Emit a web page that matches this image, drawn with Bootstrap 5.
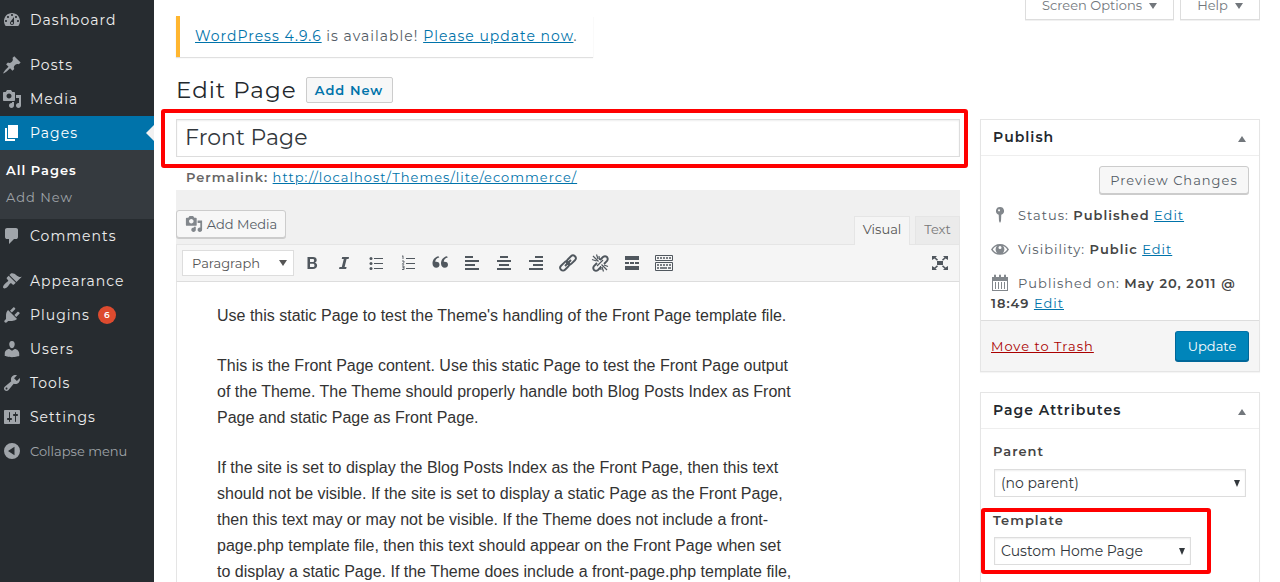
<!DOCTYPE html>
<html lang="en">
<head>
<meta charset="utf-8">
<title>Edit Page</title>
<link href="https://cdn.jsdelivr.net/npm/bootstrap@5.3.0/dist/css/bootstrap.min.css" rel="stylesheet">
<style>
body{font-family:Montserrat,Inter,sans-serif;font-size:13px;line-height:20px;letter-spacing:1px;color:#555d66;height:582px;overflow:hidden;background:#fff;white-space:nowrap}
a{color:#0073aa}
svg{flex:none;display:block;fill:currentColor}
.side{width:154px;background:#272c30;padding-top:3px}
.side .nav-link{height:34px;padding:0 0 0 2px;gap:8px;color:#eee;font-size:14px}
.side .nav-link svg{color:#a0a5aa}
.side .nav-link.active{background:#0073aa;color:#fff;position:relative}
.side .nav-link.active svg{color:#fff}
.side .nav-link.active::after{content:"";position:absolute;right:0;top:9px;border:8px solid transparent;border-right-color:#f1f1f1;border-left:0}
.gap-top{margin-top:11px}
.sub{background:#353a3f;height:69px;padding:7px 6px}
.sub .sublink{display:block;height:27px;line-height:27px;color:#a0a5aa;text-decoration:none}
.sub .cur{color:#fff;font-weight:600}
.side .fold{color:#a0a5aa;font-size:13px;letter-spacing:0}
.count{width:18px;height:18px;font-size:9px;line-height:18px;background:#dd4b2f;color:#fff;font-weight:600;letter-spacing:0}
.editor-col{width:784px;margin-left:22px;padding-top:16px}
.notice{width:417px;height:41px;border-left:4px solid #ffb630;box-shadow:0 1px 1px rgba(0,0,0,.12);padding:0 15px 1px;font-size:14px}
.headline{height:26px;margin-top:20px;gap:9px}
h1{font-size:23px;font-weight:400;letter-spacing:1px;color:#23282d;line-height:26px}
.wpbtn{background:#f7f7f7;border:1px solid #ccc;border-radius:3px;box-shadow:0 1px 0 #ccc;color:#555d66;display:flex;align-items:center;justify-content:center}
.addnew{width:87px;height:26px;color:#0073aa;font-weight:600;box-shadow:none;border-radius:2px}
.titlebox{height:38px;margin-top:16px;border:1px solid #ddd;box-shadow:inset 0 1px 2px rgba(0,0,0,.07);padding:0 8px;font-size:22px;letter-spacing:0;color:#32373c;line-height:36px;position:relative}
.mark-red{position:absolute;border:4px solid #f00;border-radius:3px;pointer-events:none}
.mark-title{left:-16px;top:-11px;width:807px;height:59px}
.perma{height:33px;padding:10px 10px 0;color:#666}
.tools{background:#f0f0f0;height:54px;padding-top:20px}
.addmedia{width:110px;height:28px;letter-spacing:0;gap:4px;padding-bottom:1px}
.tab{height:28px;margin-top:6px;border:1px solid #e5e5e5;border-bottom:0;background:#ebebeb;color:#777;letter-spacing:0;text-align:center;line-height:25px}
.tab.on{background:#f5f5f5;color:#555;height:29px;margin-bottom:-1px;position:relative}
.bar{height:38px;background:#f5f5f5;border:1px solid #e5e5e5;border-bottom-color:#ddd;padding:5px;color:#50575e}
.bar svg{width:20px;height:20px;margin-right:12px}
.fmt{width:112px;height:26px;border:1px solid #ddd;background:#fff;padding:0 6px 0 9px;letter-spacing:0;color:#555;margin-right:8px}
.doc{height:302px;border:1px solid #e5e5e5;border-top:0;padding:21px 40px;font:16px/26px "Liberation Sans",Arial,sans-serif;letter-spacing:0;color:#333}
.doc p{margin:0 0 24px}
.meta-col{width:280px;margin-left:20px}
.screen{height:20px;border:1px solid #ddd;border-top:0;box-shadow:0 1px 0 #ccc4;color:#72777c;letter-spacing:0;gap:7px;padding-bottom:8px;line-height:11px}
.pbox{border:1px solid #e5e5e5;box-shadow:0 1px 1px rgba(0,0,0,.04)}
.pbox h2{height:36px;border-bottom:1px solid #eee;margin:0;padding:0 13px 0 12px;font-size:14px;font-weight:600;letter-spacing:1px;color:#23282d}
.pbox h2 svg{margin-top:3px}
.pbox b{font-weight:600;color:#444}
.pbox .wpbtn{height:28px}
.misc{height:34px;padding-left:10px;gap:9px}
.foot{height:51px;background:#f5f5f5;border-top:1px solid #ddd;padding:0 10px}
.pbox .upd{background:#0085ba;border-color:#0073aa #006799 #006799;box-shadow:0 1px 0 #006799;color:#fff;width:74px;height:30px;letter-spacing:0}
.sel{height:28px;border:1px solid #ddd;box-shadow:inset 0 1px 2px rgba(0,0,0,.07);padding:0 5px 0 6px;font-size:14px;letter-spacing:0;color:#32373c}
.attrs{padding:12px 12px}
.attrs .sel{margin-left:1px}
</style>
</head>
<body class="d-flex">
<nav class="side nav flex-column flex-nowrap flex-shrink-0">
<a class="nav-link d-flex align-items-center"><svg width="20" height="20"><path fill-rule="evenodd" d="M3.76 16h12.48c1.1-1.37 1.76-3.11 1.76-5 0-4.42-3.58-8-8-8s-8 3.58-8 8c0 1.89.66 3.63 1.76 5zM10 4c.55 0 1 .45 1 1s-.45 1-1 1-1-.45-1-1 .45-1 1-1zM6 6c.55 0 1 .45 1 1s-.45 1-1 1-1-.45-1-1 .45-1 1-1zm8 0c.55 0 1 .45 1 1s-.45 1-1 1-1-.45-1-1 .45-1 1-1zm-5.37 5.55L12 7v6c0 1.1-.9 2-2 2s-2-.9-2-2c0-.57.24-1.08.63-1.45zM4 10c.55 0 1 .45 1 1s-.45 1-1 1-1-.45-1-1 .45-1 1-1zm12 0c.55 0 1 .45 1 1s-.45 1-1 1-1-.45-1-1 .45-1 1-1zm-5 3c0-.55-.45-1-1-1s-1 .45-1 1 .45 1 1 1 1-.45 1-1z"/></svg><span>Dashboard</span></a>
<a class="nav-link d-flex align-items-center gap-top"><svg width="20" height="20"><path d="M10.44 3.02l1.82-1.82 6.36 6.35-1.83 1.82c-1.05-.68-2.48-.57-3.41.36l-.75.75c-.92.93-1.04 2.35-.35 3.41l-1.83 1.82-2.41-2.41-2.8 2.79c-.42.42-3.38 2.71-3.8 2.29s1.86-3.39 2.28-3.81l2.79-2.79L4.1 9.36l1.83-1.82c1.05.69 2.48.57 3.4-.36l.75-.75c.93-.92 1.05-2.35.36-3.41z"/></svg><span>Posts</span></a>
<a class="nav-link d-flex align-items-center"><svg width="20" height="20"><path id="media" fill-rule="evenodd" d="M13 11V4c0-.55-.45-1-1-1h-1.67L9 1H5L3.67 3H2c-.55 0-1 .45-1 1v7c0 .55.45 1 1 1h10c.55 0 1-.45 1-1zM7 4.5c1.38 0 2.5 1.12 2.5 2.5S8.38 9.500 7 9.500 4.500 8.380 4.500 7 5.620 4.500 7 4.500zM14 6h5v10.5c0 1.380-1.120 2.500-2.500 2.500S14 17.880 14 16.500s1.120-2.500 2.500-2.500c.17 0 .34.020.5.050V9h-3V6zm-4 8.050V13h2v3.500c0 1.380-1.120 2.500-2.500 2.500S7 17.880 7 16.500 8.120 14 9.500 14c.17 0 .34.020.5.050z"/></svg><span>Media</span></a>
<a class="nav-link active d-flex align-items-center"><svg width="20" height="20"><path d="M6 15V2h10v13H6zm-1 1h8v2H3V5h2v11z"/></svg><span>Pages</span></a>
<div class="sub"><a class="sublink cur">All Pages</a><a class="sublink">Add New</a></div>
<a class="nav-link d-flex align-items-center"><svg width="20" height="20"><path d="M5 2h9q.82 0 1.410.59T16 4v7q0 .82-.59 1.410T14 13h-2l-5 5v-5H5q-.82 0-1.410-.59T3 11V4q0-.82.59-1.410T5 2z"/></svg><span>Comments</span></a>
<a class="nav-link d-flex align-items-center gap-top"><svg width="20" height="20"><path d="M14.48 11.06L7.410 3.990l1.500-1.500c.5-.56 2.300-.47 3.510.32 1.210.8 1.430 1.280 2.910 2.100 1.180.64 2.450 1.260 4.450.85zm-.71.71L6.700 4.700 4.930 6.470c-.39.39-.39 1.020 0 1.410l1.060 1.060c.39.39.39 1.030 0 1.420-.6.6-1.430 1.110-2.210 1.690-.35.26-.7.53-1.010.84C1.430 14.230.4 16.080 1.400 17.070c.99 1 2.840-.03 4.180-1.360.31-.31.58-.66.85-1.020.57-.78 1.080-1.610 1.690-2.210.39-.39 1.020-.39 1.410 0l1.060 1.060c.39.39 1.020.39 1.410 0z"/></svg><span>Appearance</span></a>
<a class="nav-link d-flex align-items-center"><svg width="20" height="20"><path d="M13.110 4.360L9.870 7.600 8 5.730l3.240-3.240c.35-.34 1.050-.2 1.560.32.52.51.66 1.210.31 1.550zm-8 1.770l.91-1.120 9.010 9.010-1.190.84c-.71.71-2.630 1.160-3.820 1.160H6.140L4.900 17.260c-.59.59-1.540.59-2.120 0-.59-.58-.59-1.530 0-2.120l1.240-1.240v-3.880c0-1.130.4-3.190 1.090-3.890zm7.260 3.970l3.240-3.240c.34-.35 1.040-.21 1.550.31.52.51.66 1.210.31 1.550l-3.240 3.250z"/></svg><span>Plugins</span><span class="count rounded-circle text-center">6</span></a>
<a class="nav-link d-flex align-items-center"><svg width="20" height="20"><path d="M10 9.250c-2.270 0-2.730-3.440-2.730-3.440C7 4.020 7.820 2 9.970 2c2.160 0 2.980 2.020 2.710 3.810 0 0-.41 3.440-2.680 3.440zm0 2.570L12.720 10c2.390 0 4.520 2.330 4.520 4.530v2.490s-3.650 1.130-7.240 1.130c-3.650 0-7.240-1.130-7.240-1.130v-2.490c0-2.250 1.940-4.480 4.470-4.480z"/></svg><span>Users</span></a>
<a class="nav-link d-flex align-items-center"><svg width="20" height="20"><path fill-rule="evenodd" d="M16.680 9.770c-1.340 1.340-3.300 1.670-4.950.99l-5.410 6.520c-.99.99-2.590.99-3.580 0s-.99-2.590 0-3.570l6.520-5.420c-.68-1.650-.35-3.610.99-4.950 1.280-1.280 3.120-1.620 4.720-1.060l-2.890 2.890 2.820 2.820 2.860-2.870c.53 1.580.18 3.390-1.080 4.650zM3.810 16.210c.4.39 1.040.39 1.430 0 .4-.4.4-1.040 0-1.430-.39-.4-1.030-.4-1.430 0-.39.39-.39 1.030 0 1.430z"/></svg><span>Tools</span></a>
<a class="nav-link d-flex align-items-center"><svg width="20" height="20"><path fill-rule="evenodd" d="M18 16V4c0-.55-.45-1-1-1H3c-.55 0-1 .45-1 1v12c0 .55.45 1 1 1h14c.55 0 1-.45 1-1zM8 11h1c.55 0 1 .45 1 1s-.45 1-1 1H8v1.500c0 .28-.22.5-.5.5s-.5-.22-.5-.5V13H6c-.55 0-1-.45-1-1s.45-1 1-1h1V5.500c0-.28.22-.5.5-.5s.5.22.5.5V11zm5-2h-1c-.55 0-1-.45-1-1s.45-1 1-1h1V5.500c0-.28.22-.5.5-.5s.5.22.5.5V7h1c.55 0 1 .45 1 1s-.45 1-1 1h-1v5.500c0 .28-.22.5-.5.5s-.5-.22-.5-.5V9z"/></svg><span>Settings</span></a>
<a class="nav-link fold d-flex align-items-center"><svg width="20" height="20"><path fill-rule="evenodd" d="M10 2a8 8 0 1 0 0 16 8 8 0 0 0 0-16zm2.500 3.700v8.600L6 10z"/></svg><span>Collapse menu</span></a>
</nav>

<main class="editor-col flex-shrink-0">
<div class="notice d-flex align-items-center"><span><a href="#">WordPress 4.9.6</a> is available! <a href="#">Please update now</a>.</span></div>
<div class="headline d-flex align-items-center"><h1 class="m-0">Edit Page</h1><div class="wpbtn addnew">Add New</div></div>
<div class="titlebox">Front Page<div class="mark-red mark-title"></div></div>
<div class="perma"><b class="fw-semibold">Permalink:</b> <a href="#">http://localhost/Themes/lite/ecommerce/</a></div>
<div class="tools d-flex"><div class="wpbtn addmedia"><svg width="18" height="18" viewBox="0 0 20 20" color="#82878c"><use href="#media"/></svg>Add Media</div>
<div class="tab on ms-auto" style="width:56px">Visual</div><div class="tab" style="width:45px;margin-left:5px">Text</div></div>
<div class="bar d-flex align-items-center">
<div class="fmt d-flex align-items-center justify-content-between"><span>Paragraph</span><i class="d-flex"><svg viewBox="0 0 8 6" style="width:8px;height:6px;margin:0"><path d="M0 0h8L4 6z"/></svg></i></div>
<svg viewBox="0 0 20 20"><path fill-rule="evenodd" d="M5.500 4H11c2.500 0 3.700 1.200 3.700 3 0 1.400-.7 2.300-1.900 2.700 1.500.3 2.300 1.400 2.300 2.900 0 2.300-1.600 3.400-4.200 3.400H5.500zM8 6v2.900h2.500c1.100 0 1.600-.5 1.600-1.500 0-.9-.5-1.400-1.600-1.400zm0 4.700V14h2.700c1.200 0 1.800-.5 1.800-1.600 0-1.200-.6-1.700-1.800-1.700z"/></svg>
<svg viewBox="0 0 20 20"><path d="M8.200 4H15l-.4 2h-2l-2 8h2l-.5 2H5l.5-2h2.300l2-8H7.700z"/></svg>
<svg viewBox="0 0 20 20"><path d="M8 5h9v1H8zm0 5h9v1H8zm0 5h9v1H8z"/><circle cx="5" cy="5.500" r="1.500"/><circle cx="5" cy="10.500" r="1.500"/><circle cx="5" cy="15.500" r="1.500"/></svg>
<svg viewBox="0 0 20 20"><path d="M8 5h9v1H8zm0 5h9v1H8zm0 5h9v1H8z"/><path fill="none" stroke="currentColor" stroke-width=".9" d="M4 3.500l1-.8V6M4 8h2v1.200L4.400 11.200H6.200M4 13h2v3.500H4m.5-1.800H6"/></svg>
<svg viewBox="0 0 20 20"><path d="M9.300 4.600C6.800 5.200 5.300 6.500 5.300 9c.5-.4 4.200-.6 4.200 2.700 0 1.800-1.400 3.100-3.200 3.100-2.300 0-3.800-1.800-3.800-4.300 0-3.500 2.200-6.700 6-7.300zm8.500 0C15.300 5.200 13.800 6.500 13.800 9c.5-.4 4.200-.6 4.200 2.700 0 1.800-1.400 3.100-3.200 3.100-2.300 0-3.800-1.800-3.800-4.300 0-3.500 2.200-6.700 6-7.300z"/></svg>
<svg viewBox="0 0 20 20"><path d="M3 3h8v2H3zm0 4h14v2H3zm0 4h10v2H3zm0 4h14v2H3z"/></svg>
<svg viewBox="0 0 20 20"><path d="M6 3h8v2H6zM3 7h14v2H3zm2 4h10v2H5zm-2 4h14v2H3z"/></svg>
<svg viewBox="0 0 20 20"><path d="M9 3h8v2H9zM3 7h14v2H3zm4 4h10v2H7zm-4 4h14v2H3z"/></svg>
<svg viewBox="0 0 20 20"><g fill="none" stroke="currentColor" stroke-width="1.900"><rect x="8" y="4.200" width="10.500" height="5.600" rx="2.800" transform="rotate(-45 13.200 7)"/><rect x="1.500" y="10.200" width="10.500" height="5.600" rx="2.800" transform="rotate(-45 6.800 13)"/><path d="M7 13l6-6"/></g></svg>
<svg viewBox="0 0 20 20"><g fill="none" stroke="currentColor" stroke-width="1.900"><path d="M10 7l3-3q2-1.700 4 0 1.500 2 0 4l-3 3M11 14l-3 3q-2 1.500-4 0-1.500-2 0-4l3-3"/><path stroke-width="1.200" d="M8.500 8.500L3 3M8 6L6.500 1.500M6.500 8L2 6.500M11.500 11.500L17 17M12 14l1.500 4.500M14 12l4 1.500M9.500 7L9 3M10.500 13l.5 4M7 13l6-6"/></g></svg>
<svg viewBox="0 0 20 20"><path d="M3 3h14v4H3zm0 6h4v2H3zm5 0h4v2H8zm5 0h4v2h-4zM3 13h14v4H3z"/></svg>
<svg viewBox="0 0 20 20"><g fill="none" stroke="currentColor"><path d="M1.500 2.500h17v5h-17zM1.500 9.500h17v8h-17z"/><path stroke-width="1.700" stroke-dasharray="2 1" d="M3 5h14M3 12h14"/><path stroke-width="1.500" d="M3 15h2m1 0h7m1 0h3"/></g></svg>
<svg viewBox="0 0 20 20" class="ms-auto" style="margin-right:4px"><path d="M7 8h6v4H7zM2 3h5L5.500 4.500l2.500 2-1 1.200-2.500-2.200L2 7zm16 0h-5l1.500 1.500-2.500 2 1 1.200 2.500-2.200L18 7zM2 17h5l-1.500-1.500 2.500-2-1-1.200-2.500 2.200L2 13zm16 0h-5l1.500-1.500-2.500-2 1-1.200 2.500 2.200L18 13z"/></svg>
</div>
<div class="doc"><p>Use this static Page to test the Theme's handling of the Front Page template file.</p>
<p>This is the Front Page content. Use this static Page to test the Front Page output<br>of the Theme. The Theme should properly handle both Blog Posts Index as Front<br>Page and static Page as Front Page.</p>
<p>If the site is set to display the Blog Posts Index as the Front Page, then this text<br>should not be visible. If the site is set to display a static Page as the Front Page,<br>then this text may or may not be visible. If the Theme does not include a front-<br>page.php template file, then this text should appear on the Front Page when set<br>to display a static Page. If the Theme does include a front-page.php template file,</p></div>
</main>

<aside class="meta-col flex-shrink-0">
<div class="d-flex justify-content-end" style="gap:6px;margin-bottom:99px"><div class="screen d-flex align-items-center justify-content-center" style="width:149px">Screen Options <svg width="8" height="6"><path d="M0 0h8L4 6z"/></svg></div><div class="screen d-flex align-items-center justify-content-center" style="width:80px">Help <svg width="8" height="6"><path d="M0 0h8L4 6z"/></svg></div></div>
<section class="pbox" style="height:253px">
<h2 class="d-flex align-items-center justify-content-between">Publish<svg width="8" height="6" color="#72777c"><path d="M0 6h8L4 0z"/></svg></h2>
<div class="d-flex justify-content-end" style="padding:10px 10px 4px"><div class="wpbtn" style="width:150px">Preview Changes</div></div>
<div class="misc d-flex align-items-center"><svg width="18" height="20" viewBox="1 0 18 20" color="#82878c"><path fill-rule="evenodd" d="M10 2a4 4 0 0 1 1.300 7.800L11 16l-1 2-1-2-.3-6.200A4 4 0 0 1 10 2zM9 4.200a1 1 0 1 0 .1 0z"/></svg><span>Status: <b>Published</b> <a href="#">Edit</a></span></div>
<div class="misc d-flex align-items-center"><svg width="18" height="20" viewBox="1 0 18 20" color="#82878c"><path fill-rule="evenodd" d="M1 10.500C3 7 6 5 10 5s7 2 9 5.500c-2 3.300-5 5.300-9 5.300s-7-2-9-5.300zm1.800 0c1.200 1.800 2.700 3 4.300 3.500-2-2-2-5.200-.1-7-1.700.6-3.200 1.800-4.200 3.500zm14.400 0c-1-1.700-2.500-2.900-4.200-3.500 1.900 1.800 1.900 5-.1 7 1.600-.5 3.100-1.700 4.300-3.500zM10 7a1.500 1.500 0 1 0 0 3 1.500 1.500 0 0 0 0-3z"/></svg><span>Visibility: <b>Public</b> <a href="#">Edit</a></span></div>
<div class="misc d-flex align-items-center"><svg width="18" height="20" viewBox="1 0 18 20" color="#82878c"><path fill-rule="evenodd" d="M2 4h2V2.500a1 1 0 0 1 2 0V4h3V2.500a1 1 0 0 1 2 0V4h3V2.500a1 1 0 0 1 2 0V4h2v14H2zm1 4v9h14V8zM5 9h1v7H5zm3 0h1v7H8zm3 0h1v7h-1zm3 0h1v7h-1z"/></svg><span>Published on: <b>May 20, 2011 @</b></span></div>
<div style="padding-left:10px;height:30px;margin-top:-10px;line-height:26px"><b>18:49</b> <a href="#">Edit</a></div>
<div class="foot d-flex align-items-center justify-content-between"><a href="#" style="color:#a00">Move to Trash</a><div class="wpbtn upd">Update</div></div>
</section>
<section class="pbox" style="height:210px;margin-top:20px">
<h2 class="d-flex align-items-center justify-content-between">Page Attributes<svg width="8" height="6" color="#72777c"><path d="M0 6h8L4 0z"/></svg></h2>
<div class="attrs"><b class="d-block">Parent</b>
<div class="sel d-flex align-items-center justify-content-between" style="margin-top:8px;width:252px">(no parent)<svg width="6" height="7"><path d="M0 0h6L3 7z"/></svg></div>
<div class="position-relative" style="margin-top:13px"><b class="d-block">Template</b>
<div class="sel d-flex align-items-center justify-content-between" style="margin-top:7px;width:197px">Custom Home Page<svg width="6" height="7"><path d="M0 0h6L3 7z"/></svg></div>
<div class="mark-red" style="left:-12px;top:-2px;width:230px;height:66px"></div></div></div>
</section>
</aside>
<script src="https://cdn.jsdelivr.net/npm/bootstrap@5.3.0/dist/js/bootstrap.bundle.min.js"></script>
</body>
</html>
